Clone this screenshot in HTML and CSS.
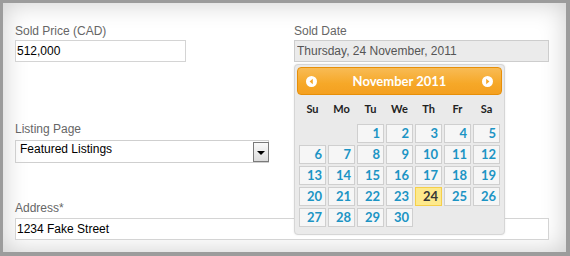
FILE: index.html
```html
<!DOCTYPE html>
<html lang="en">
<head>
  <meta charset="UTF-8" />
  <title>Sold Listing</title>
  <link rel="stylesheet" href="styles.css">
</head>
<body>
<div class="panel">
  <div class="row">
    <div class="field price">
      <label>Sold Price (CAD)</label>
      <input class="text" type="text" value="512,000" />
    </div>
    <div class="field date">
      <label>Sold Date</label>
      <input class="text readonly" type="text" value="Thursday, 24 November, 2011" readonly />

      <div class="datepicker">
        <div class="dp-header">
          <svg class="dp-nav" width="11" height="11" viewBox="0 0 11 11"><circle cx="5.5" cy="5.5" r="5.5" fill="#fff"/><polygon points="6.8,2.8 6.8,8.2 3.6,5.5" fill="#f6a828"/></svg>
          <span class="dp-title">November 2011</span>
          <svg class="dp-nav" width="11" height="11" viewBox="0 0 11 11"><circle cx="5.5" cy="5.5" r="5.5" fill="#fff"/><polygon points="4.2,2.8 4.2,8.2 7.4,5.5" fill="#f6a828"/></svg>
        </div>
        <div class="dp-grid">
          <span class="dp-dow">Su</span><span class="dp-dow">Mo</span><span class="dp-dow">Tu</span><span class="dp-dow">We</span><span class="dp-dow">Th</span><span class="dp-dow">Fr</span><span class="dp-dow">Sa</span>
          <a class="dp-day first">1</a><a class="dp-day">2</a><a class="dp-day">3</a><a class="dp-day">4</a><a class="dp-day">5</a>
          <a class="dp-day">6</a><a class="dp-day">7</a><a class="dp-day">8</a><a class="dp-day">9</a><a class="dp-day">10</a><a class="dp-day">11</a><a class="dp-day">12</a>
          <a class="dp-day">13</a><a class="dp-day">14</a><a class="dp-day">15</a><a class="dp-day">16</a><a class="dp-day">17</a><a class="dp-day">18</a><a class="dp-day">19</a>
          <a class="dp-day">20</a><a class="dp-day">21</a><a class="dp-day">22</a><a class="dp-day">23</a><a class="dp-day active">24</a><a class="dp-day">25</a><a class="dp-day">26</a>
          <a class="dp-day">27</a><a class="dp-day">28</a><a class="dp-day">29</a><a class="dp-day">30</a>
        </div>
      </div>
    </div>
  </div>

  <div class="field listing">
    <label>Listing Page</label>
    <div class="select">
      <span>Featured Listings</span>
      <span class="select-btn"><i></i></span>
    </div>
  </div>

  <div class="field address">
    <label>Address*</label>
    <input class="text" type="text" value="1234 Fake Street" />
  </div>
</div>
</body>
</html>
```

FILE: styles.css
```css
* { box-sizing: border-box; }
body {
  margin: 0;
  background: #9c9c9c;
  font-family: 'Liberation Sans', Arial, sans-serif;
  font-size: 12px;
  overflow: hidden;
}
.panel {
  margin: 3px;
  width: 563px;
  height: 249px;
  background: #fff;
  box-shadow: inset 0 0 26px rgba(0,0,0,0.2);
  padding: 21px 0 0 12px;
}
.row {
  display: flex;
}
.field label {
  display: block;
  color: #666;
  line-height: 14px;
  margin-bottom: 2px;
}
.text {
  display: block;
  height: 22px;
  border: 1px solid #d4d4d4;
  padding: 0 1px;
  font-family: 'Liberation Sans', Arial, sans-serif;
  font-size: 12px;
  color: #000;
  background: #fff;
  outline: none;
}
.price { width: 279px; }
.price .text { width: 171px; }
.date {
  width: 255px;
  position: relative;
}
.date .text {
  width: 255px;
  padding: 0 2px;
}
.text.readonly {
  background: #ebebeb;
  border-color: #cdcdcd;
  color: #555;
}

.listing { margin-top: 60px; }
.listing label { margin-bottom: 4px; }
.select {
  width: 254px;
  height: 23px;
  border: 1px solid #cfcfcf;
  display: flex;
  justify-content: space-between;
  padding: 1px 0 0 4px;
  line-height: 14px;
  color: #000;
}
.select-btn {
  width: 16px;
  height: 20px;
  margin-right: -1px;
  border: 1px solid #7a7a7a;
  background: linear-gradient(#fafafa, #dcdcdc);
  display: flex;
  align-items: center;
  justify-content: center;
}
.select-btn i {
  width: 0;
  height: 0;
  border-left: 4px solid transparent;
  border-right: 4px solid transparent;
  border-top: 4px solid #000;
  margin-top: 1px;
}

.address { margin-top: 38px; }
.address label { margin-bottom: 3px; }
.address .text { width: 534px; }

/* datepicker popup */
.datepicker {
  position: absolute;
  top: 40px;
  left: 0;
  width: 211px;
  border: 1px solid #d6d6d6;
  border-radius: 4px;
  background: #eaeaea;
  padding: 2px 2px 7px 2px;
  font-family: Lato, 'DejaVu Sans', sans-serif;
  box-shadow: 0 0 2px rgba(0,0,0,0.1);
}
.dp-header {
  height: 28px;
  border: 1px solid #e78f08;
  border-radius: 4px;
  background: linear-gradient(#f8bb55, #f6a828 60%, #f4a020);
  display: flex;
  align-items: center;
  justify-content: space-between;
  padding: 0 8px 0 8px;
}
.dp-title {
  color: #fff;
  font-weight: bold;
  font-size: 13px;
}
.dp-nav { display: block; }
.dp-grid {
  display: grid;
  grid-template-columns: repeat(7, 27px);
  grid-template-rows: 26px;
  grid-auto-rows: 19px;
  gap: 2px;
  margin: 1px 0 0 2px;
}
.dp-dow {
  text-align: center;
  line-height: 26px;
  font-weight: bold;
  font-size: 11px;
  color: #222;
}
.dp-day {
  border: 1px solid #cfcfcf;
  background: #f6f6f6;
  color: #1c94c4;
  font-weight: bold;
  font-size: 13px;
  line-height: 17px;
  text-align: right;
  padding-right: 3px;
}
.dp-day.first { grid-column-start: 3; }
.dp-day.active {
  background: #fde98c;
  border-color: #f5cf4a;
  color: #363636;
}
```
